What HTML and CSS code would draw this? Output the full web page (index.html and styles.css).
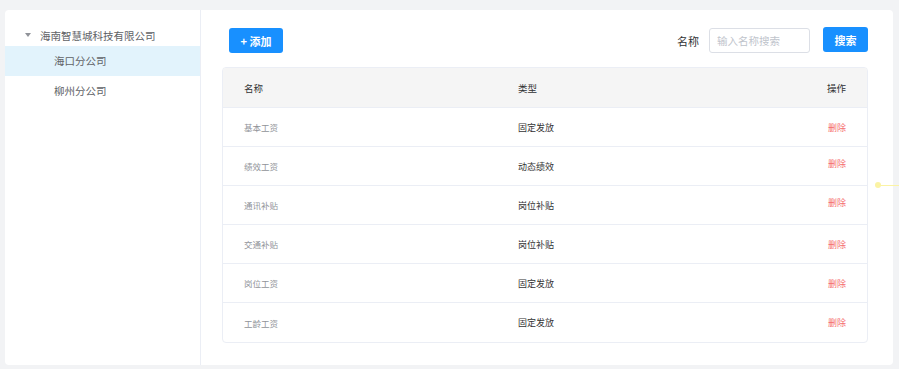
FILE: index.html
```html
<!DOCTYPE html>
<html lang="zh-CN">
<head>
    <meta charset="UTF-8">
    <title>工资项目</title>
    <link rel="stylesheet" href="styles.css">
</head>
<body>

<div class="card">
    <div class="sidebar">
        <div class="tree-root">
            <span class="caret"></span>
            <span>海南智慧城科技有限公司</span>
        </div>
        <div class="tree-child active">海口分公司</div>
        <div class="tree-child">柳州分公司</div>
    </div>

    <div class="main">
        <div class="toolbar">
            <button class="btn btn-add">+ 添加</button>
            <div class="search">
                <span class="search-label">名称</span>
                <input type="text" class="search-input" placeholder="输入名称搜索">
                <button class="btn btn-search">搜索</button>
            </div>
        </div>

        <div class="table">
            <div class="row head">
                <div>名称</div>
                <div>类型</div>
                <div class="op">操作</div>
            </div>
            <div class="row">
                <div class="name">基本工资</div>
                <div class="type">固定发放</div>
                <div class="op"><a class="del">删除</a></div>
            </div>
            <div class="row">
                <div class="name">绩效工资</div>
                <div class="type">动态绩效</div>
                <div class="op"><a class="del up">删除</a></div>
            </div>
            <div class="row">
                <div class="name">通讯补贴</div>
                <div class="type">岗位补贴</div>
                <div class="op"><a class="del up">删除</a></div>
            </div>
            <div class="row">
                <div class="name">交通补贴</div>
                <div class="type">岗位补贴</div>
                <div class="op"><a class="del">删除</a></div>
            </div>
            <div class="row">
                <div class="name">岗位工资</div>
                <div class="type">固定发放</div>
                <div class="op"><a class="del">删除</a></div>
            </div>
            <div class="row">
                <div class="name">工龄工资</div>
                <div class="type">固定发放</div>
                <div class="op"><a class="del">删除</a></div>
            </div>
        </div>
    </div>
</div>

<div class="marker"><span class="dot"></span></div>

</body>
</html>
```

FILE: styles.css
```css
* {
    box-sizing: border-box;
}

body {
    margin: 0;
    padding: 10px 6px 4px 5px;
    background-color: #f2f3f5;
    font-family: "Noto Sans CJK SC", "Noto Sans", sans-serif;
    color: #606266;
}

.card {
    display: flex;
    height: 355px;
    background: #fff;
    border-radius: 4px;
}

/* tree */
.sidebar {
    width: 196px;
    border-right: 1px solid #ebeef5;
    padding-top: 14px;
}

.tree-root {
    display: flex;
    align-items: center;
    height: 22px;
    padding-left: 20px;
    font-size: 10.5px;
    color: #606266;
}

.caret {
    width: 0;
    height: 0;
    border-left: 3.5px solid transparent;
    border-right: 3.5px solid transparent;
    border-top: 4px solid #909399;
    margin-right: 9px;
}

.tree-child {
    height: 30px;
    line-height: 30px;
    padding-left: 49px;
    font-size: 10.5px;
    color: #606266;
}

.tree-child.active {
    background-color: #e2f3fc;
}

/* main */
.main {
    flex: 1;
    padding: 18px 25px 0 21px;
}

.toolbar {
    display: flex;
    justify-content: space-between;
    align-items: center;
    padding-left: 7px;
    height: 25px;
}

.btn {
    height: 25px;
    border: none;
    border-radius: 3px;
    background-color: #1890ff;
    color: #fff;
    font-family: inherit;
    font-size: 11px;
    font-weight: 700;
    padding: 0;
    cursor: pointer;
}

.btn-add {
    width: 54px;
}

.search {
    display: flex;
    align-items: center;
}

.search-label {
    font-size: 11px;
    color: #303133;
    margin-right: 10px;
}

.search-input {
    width: 101px;
    height: 25px;
    border: 1px solid #dcdfe6;
    border-radius: 3px;
    padding: 0 7px;
    font-family: inherit;
    font-size: 10.5px;
    margin-right: 13px;
    outline: none;
}

.search-input::placeholder {
    color: #c0c4cc;
}

.btn-search {
    width: 45px;
    margin-top: -2px;
}

/* table */
.table {
    margin-top: 14px;
    border: 1px solid #ebeef5;
    border-radius: 4px;
    overflow: hidden;
}

.row {
    display: grid;
    grid-template-columns: 274px 1fr 90px;
    align-items: center;
    height: 39px;
    font-size: 9px;
}

.row + .row {
    border-top: 1px solid #ebeef5;
}

.row > div {
    padding: 0 21px;
}

.row.head {
    height: 39px;
    background-color: #f5f5f5;
    color: #303133;
    font-size: 9.5px;
    border-top: none;
}

.row.head + .row {
    height: 39px;
}

.row:last-child {
    height: 40px;
}

.op {
    text-align: right;
}

.name {
    color: #909399;
    font-size: 8.5px;
}

.type {
    color: #333;
}

.del {
    color: #f56c6c;
    font-size: 9px;
}

.del.up {
    position: relative;
    top: -3px;
}

/* stray overlay marker */
.marker {
    position: absolute;
    left: 875px;
    top: 182px;
    width: 24px;
    height: 6px;
}

.marker::after {
    content: "";
    position: absolute;
    left: 3px;
    right: 0;
    top: 2.5px;
    height: 1px;
    background: #fbf3a4;
}

.dot {
    position: absolute;
    left: 0;
    top: 0;
    width: 6px;
    height: 6px;
    border-radius: 50%;
    background: #fbf3a4;
}
```
